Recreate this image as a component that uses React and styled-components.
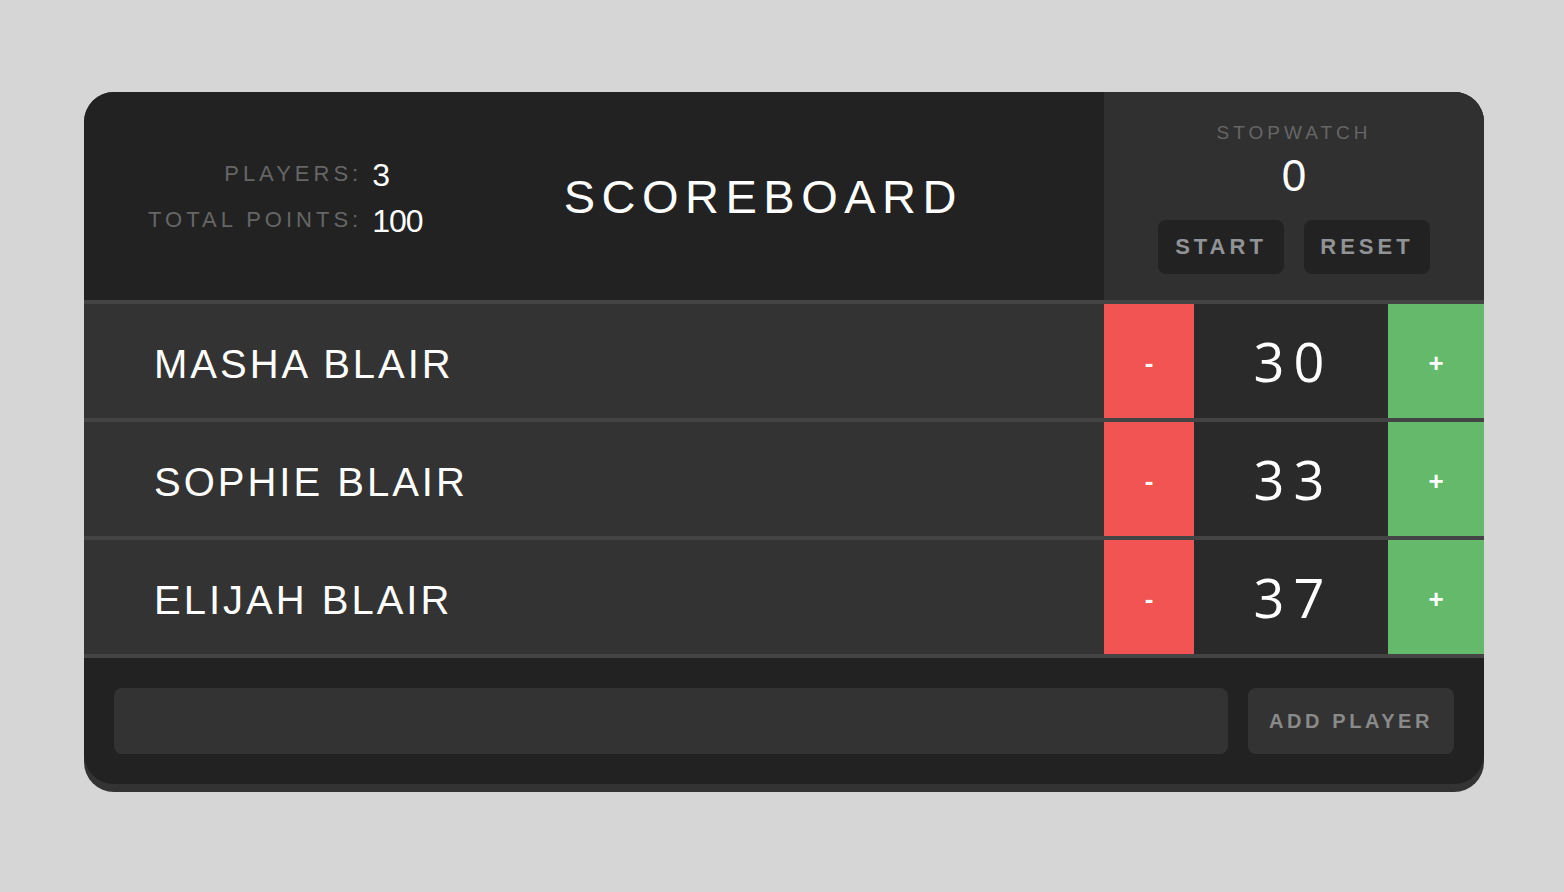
import React from "react";
import styled, { createGlobalStyle } from "styled-components";

const Global = createGlobalStyle`
  html, body { margin: 0; padding: 0; background: #d6d6d6; }
  body { font-family: "Liberation Sans", Arial, sans-serif; }
  * { box-sizing: border-box; }
`;

const Page = styled.div`
  padding: 92px 80px 0 84px;
`;

const CardShadow = styled.div`
  background: #333;
  border-radius: 30px;
  padding-bottom: 8px;
`;

const Card = styled.div`
  background: #222;
  border-radius: 30px;
  overflow: hidden;
`;

const Header = styled.header`
  display: flex;
  height: 208px;
`;

const HeaderMain = styled.div`
  flex: 1;
  display: flex;
  align-items: center;
  padding-left: 64px;
`;

const Stats = styled.div`
  display: grid;
  grid-template-columns: auto auto;
  column-gap: 10px;
  align-items: center;
  line-height: 44px;
  margin-top: 2px;
`;

const StatLabel = styled.span`
  text-align: right;
  font-size: 22px;
  letter-spacing: 4px;
  color: #666;
  text-transform: uppercase;
`;

const StatValue = styled.span`
  font-size: 32px;
  letter-spacing: -1px;
  color: #fff;
  padding-top: 2px;
`;

const Title = styled.h1`
  flex: 1;
  margin: 0;
  text-align: center;
  font-size: 47px;
  font-weight: 400;
  letter-spacing: 6.5px;
  color: #fff;
  text-transform: uppercase;
`;

const Stopwatch = styled.div`
  width: 380px;
  background: #303030;
  display: flex;
  flex-direction: column;
  align-items: center;
  padding: 30px 0 26px;
`;

const WatchLabel = styled.div`
  font-size: 19px;
  line-height: 22px;
  letter-spacing: 4px;
  color: #666;
`;

const WatchTime = styled.div`
  margin-top: 8px;
  font-size: 44px;
  line-height: 48px;
  color: #fff;
`;

const WatchButtons = styled.div`
  margin-top: 20px;
  display: flex;
  gap: 20px;
`;

const Button = styled.button`
  width: ${(p) => p.$width || 126}px;
  height: ${(p) => p.$height || 54}px;
  border: none;
  border-radius: 8px;
  background: ${(p) => p.$bg || "#222"};
  color: ${(p) => p.$color || "#919396"};
  font-family: "Liberation Sans", Arial, sans-serif;
  font-weight: 700;
  font-size: ${(p) => p.$size || 22}px;
  letter-spacing: ${(p) => p.$spacing || 4}px;
  text-transform: uppercase;
  padding: 0;
  cursor: pointer;
`;

const Row = styled.div`
  display: flex;
  height: 118px;
  border-top: 4px solid #444;
  background: #333;
`;

const Name = styled.div`
  flex: 1;
  display: flex;
  align-items: center;
  padding: 6px 0 0 70px;
  font-size: 40px;
  letter-spacing: 3px;
  color: #fff;
  text-transform: uppercase;
`;

const Counter = styled.div`
  display: flex;
`;

const CountButton = styled.button`
  width: ${(p) => p.$width}px;
  border: none;
  background: ${(p) => p.$bg};
  color: #fff;
  font-family: "Liberation Sans", Arial, sans-serif;
  font-weight: 700;
  font-size: 26px;
  padding: 4px 0 0;
  display: flex;
  align-items: center;
  justify-content: center;
  cursor: pointer;
`;

const Score = styled.div`
  width: 194px;
  background: #2a2a2a;
  display: flex;
  align-items: center;
  justify-content: center;
  font-family: "Open Sans", "Noto Sans", sans-serif;
  font-size: 54px;
  letter-spacing: 9px;
  padding-left: 5px;
  color: #fff;
`;

const Footer = styled.form`
  display: flex;
  gap: 20px;
  padding: 30px;
  border-top: 4px solid #444;
`;

const Input = styled.input`
  flex: 1;
  height: 66px;
  border: none;
  border-radius: 8px;
  background: #333;
  outline: none;
  color: #fff;
  font-size: 22px;
  padding: 0 20px;
`;

const players = [
  { name: "Masha Blair", score: 30 },
  { name: "Sophie Blair", score: 33 },
  { name: "Elijah Blair", score: 37 },
];

export default function App() {
  const total = players.reduce((s, p) => s + p.score, 0);
  return (
    <>
      <Global />
      <Page>
        <CardShadow>
          <Card>
            <Header>
              <HeaderMain>
                <Stats>
                  <StatLabel>Players:</StatLabel>
                  <StatValue>{players.length}</StatValue>
                  <StatLabel>Total Points:</StatLabel>
                  <StatValue>{total}</StatValue>
                </Stats>
                <Title>Scoreboard</Title>
              </HeaderMain>
              <Stopwatch>
                <WatchLabel>STOPWATCH</WatchLabel>
                <WatchTime>0</WatchTime>
                <WatchButtons>
                  <Button>Start</Button>
                  <Button>Reset</Button>
                </WatchButtons>
              </Stopwatch>
            </Header>
            {players.map((p) => (
              <Row key={p.name}>
                <Name>{p.name}</Name>
                <Counter>
                  <CountButton $width={90} $bg="#f25353">-</CountButton>
                  <Score>{p.score}</Score>
                  <CountButton $width={96} $bg="#64ba6a">+</CountButton>
                </Counter>
              </Row>
            ))}
            <Footer onSubmit={(e) => e.preventDefault()}>
              <Input type="text" />
              <Button $width={206} $height={66} $size={20} $spacing={3.6} $bg="#333" $color="#8a8a8a">
                Add Player
              </Button>
            </Footer>
          </Card>
        </CardShadow>
      </Page>
    </>
  );
}
